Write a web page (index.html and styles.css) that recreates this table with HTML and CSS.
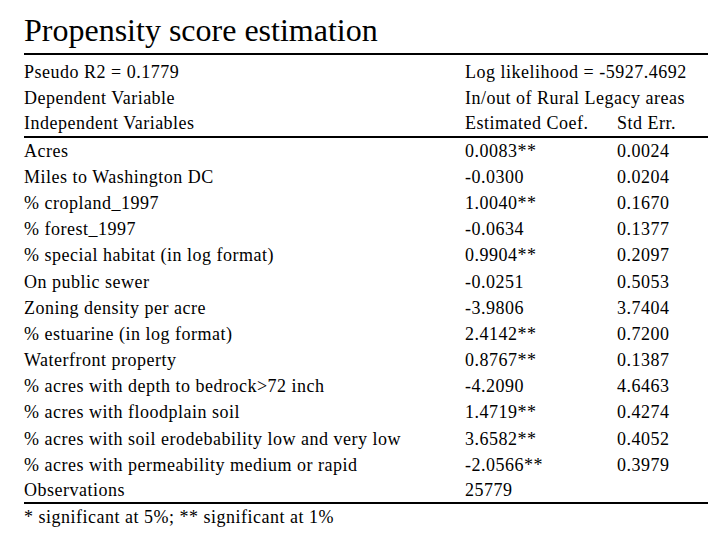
FILE: index.html
```html
<!DOCTYPE html>
<html>
<head>
<meta charset="utf-8">
<link rel="stylesheet" href="styles.css">
</head>
<body>
<div class="page">
  <h1 class="title">Propensity score estimation</h1>
  <div class="table">
    <div class="group head">
      <div class="row"><span>Pseudo R2 = 0.1779</span><span class="wide">Log likelihood = -5927.4692</span></div>
      <div class="row"><span>Dependent Variable</span><span class="wide">In/out of Rural Legacy areas</span></div>
      <div class="row last"><span>Independent Variables</span><span>Estimated Coef.</span><span>Std Err.</span></div>
    </div>
    <div class="group body">
      <div class="row"><span>Acres</span><span>0.0083**</span><span>0.0024</span></div>
      <div class="row"><span>Miles to Washington DC</span><span>-0.0300</span><span>0.0204</span></div>
      <div class="row"><span>% cropland_1997</span><span>1.0040**</span><span>0.1670</span></div>
      <div class="row"><span>% forest_1997</span><span>-0.0634</span><span>0.1377</span></div>
      <div class="row"><span>% special habitat (in log format)</span><span>0.9904**</span><span>0.2097</span></div>
      <div class="row"><span>On public sewer</span><span>-0.0251</span><span>0.5053</span></div>
      <div class="row"><span>Zoning density per acre</span><span>-3.9806</span><span>3.7404</span></div>
      <div class="row"><span>% estuarine (in log format)</span><span>2.4142**</span><span>0.7200</span></div>
      <div class="row"><span>Waterfront property</span><span>0.8767**</span><span>0.1387</span></div>
      <div class="row"><span>% acres with depth to bedrock&gt;72 inch</span><span>-4.2090</span><span>4.6463</span></div>
      <div class="row"><span>% acres with floodplain soil</span><span>1.4719**</span><span>0.4274</span></div>
      <div class="row"><span>% acres with soil erodebability low and very low</span><span>3.6582**</span><span>0.4052</span></div>
      <div class="row"><span>% acres with permeability medium or rapid</span><span>-2.0566**</span><span>0.3979</span></div>
      <div class="row last"><span>Observations</span><span>25779</span><span></span></div>
    </div>
    <div class="note">* significant at 5%; ** significant at 1%</div>
  </div>
</div>
</body>
</html>
```
FILE: styles.css
```css
html, body {
  margin: 0;
  padding: 0;
  background: #ffffff;
}
body {
  font-family: "Liberation Serif", "Times New Roman", serif;
  color: #000000;
}
.page {
  width: 684px;
  margin-left: 24px;
}
.title {
  margin: 0;
  box-sizing: border-box;
  height: 55px;
  padding-top: 12px;
  font-size: 32px;
  font-weight: normal;
  line-height: 36px;
  border-bottom: 2px solid #000000;
}
.table {
  padding-top: 4px;
  font-size: 18px;
  letter-spacing: 0.5px;
}
.row {
  display: grid;
  grid-template-columns: 441px 152px 1fr;
  height: 26.2px;
  line-height: 26.2px;
  box-sizing: border-box;
  white-space: nowrap;
}
.row .wide {
  grid-column: 2 / 4;
}
.row.last {
  border-bottom: 2px solid #000000;
  line-height: 24.2px;
}
.note {
  height: 26px;
  line-height: 26px;
}
```
